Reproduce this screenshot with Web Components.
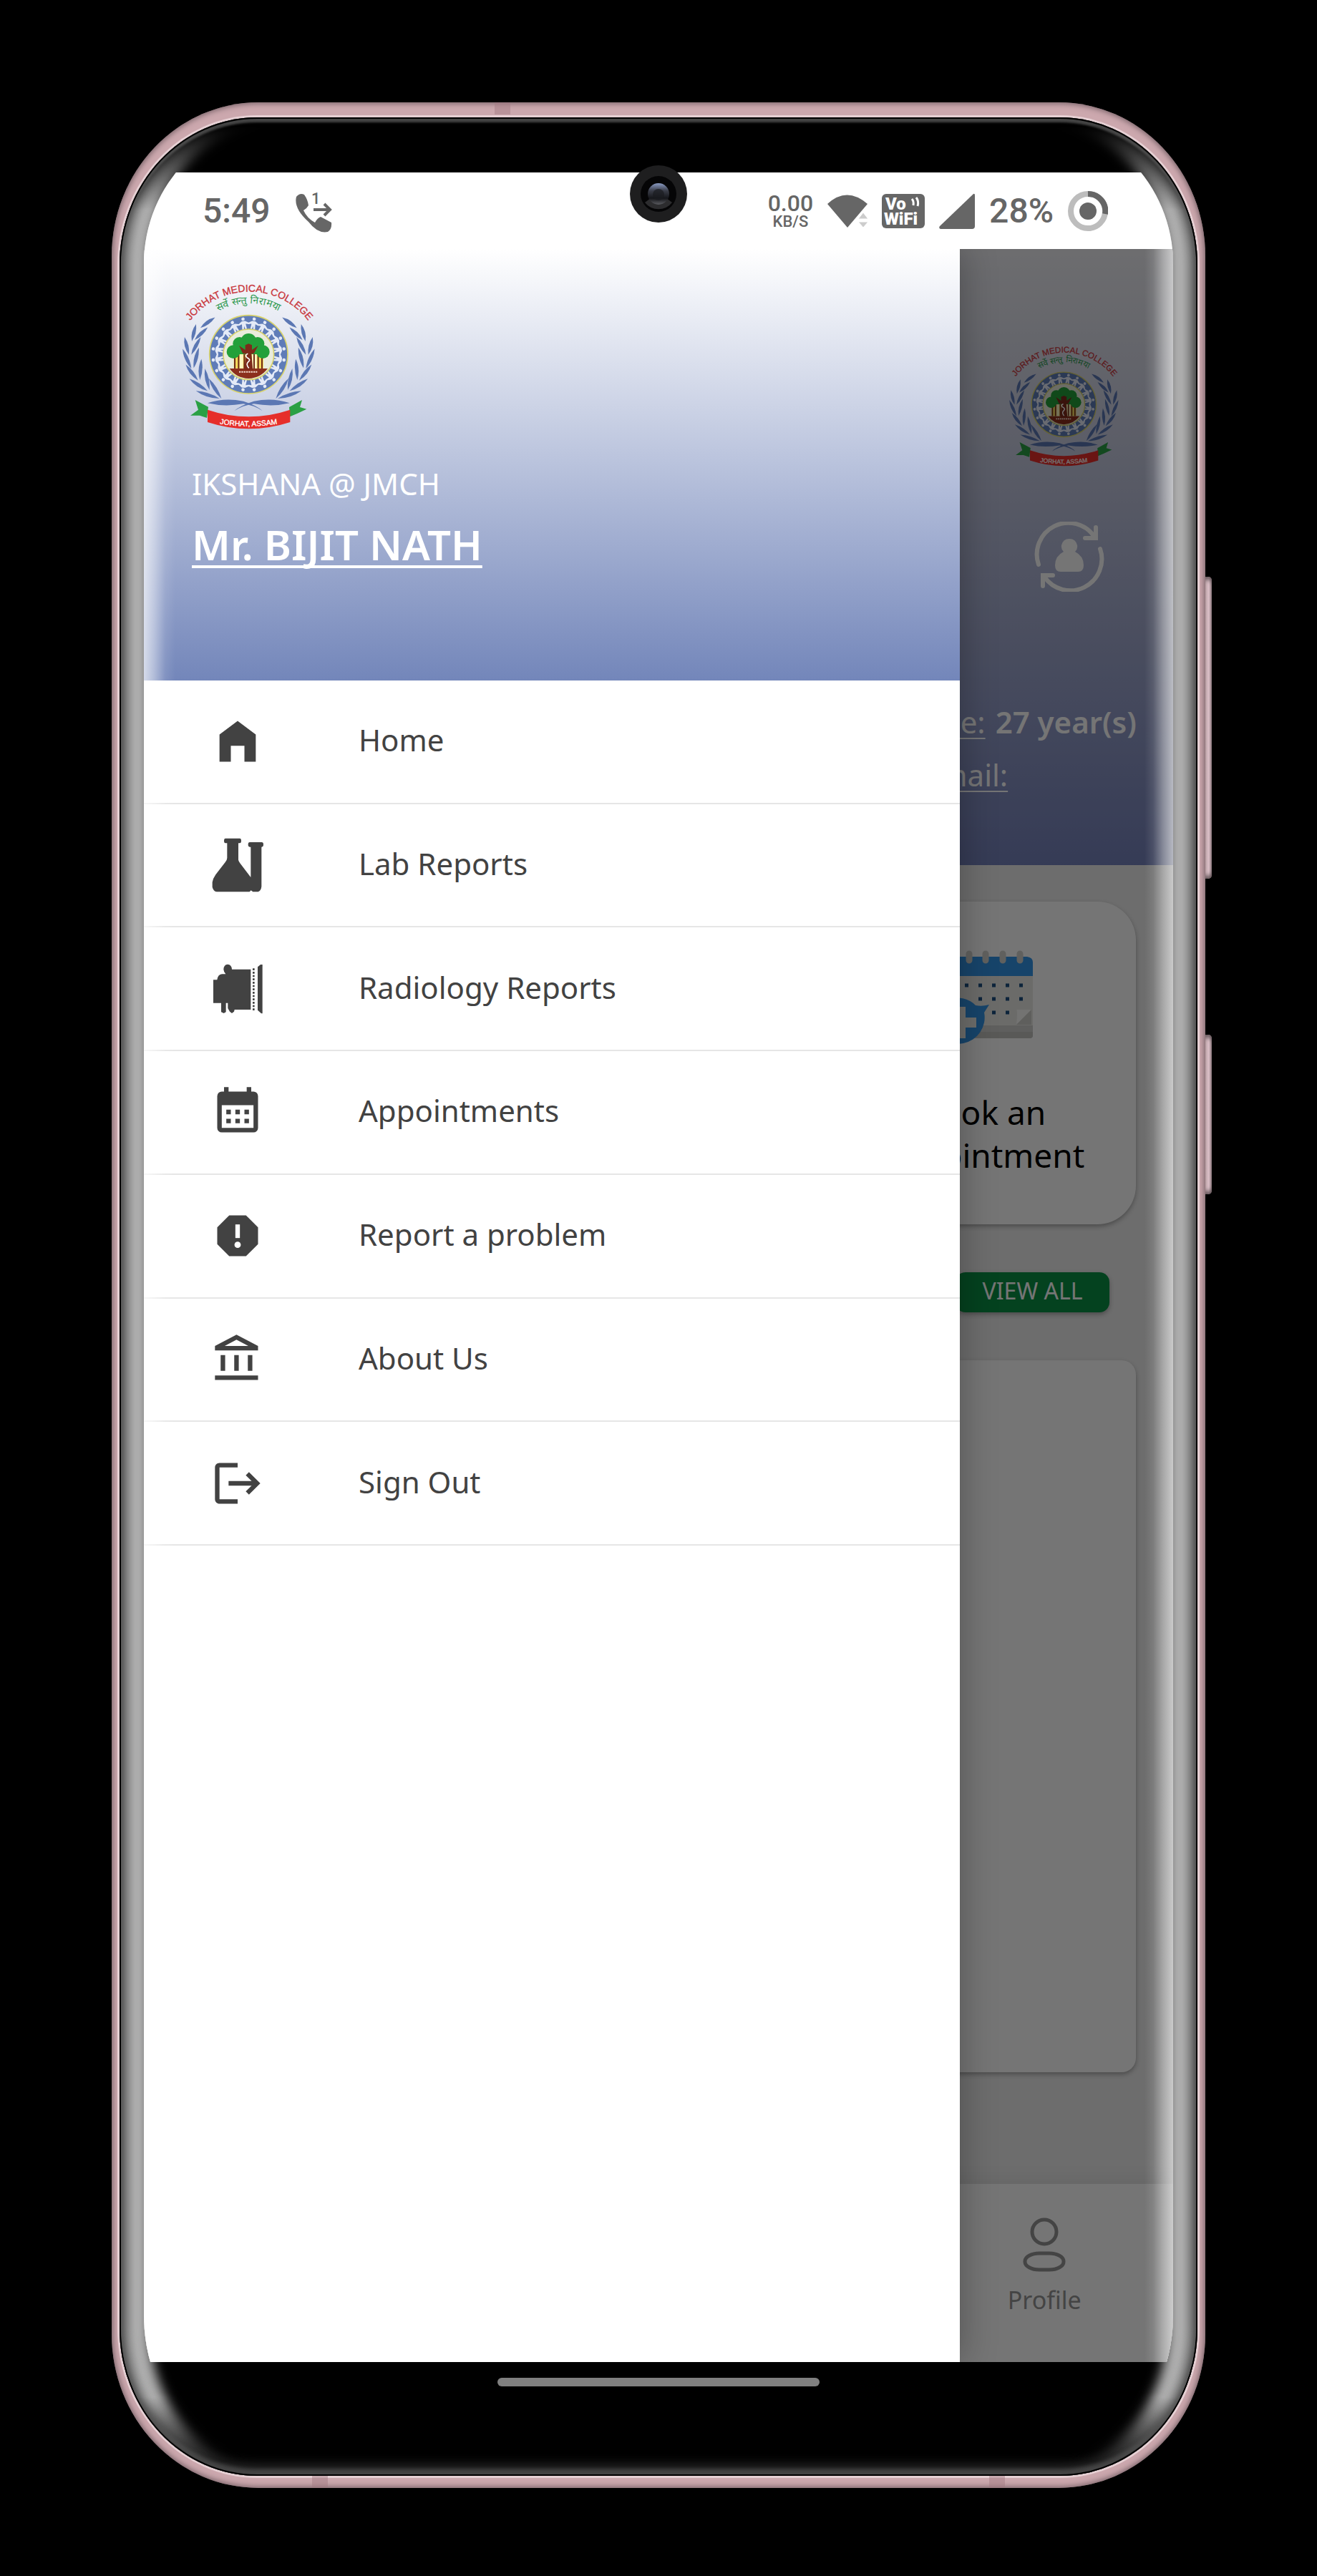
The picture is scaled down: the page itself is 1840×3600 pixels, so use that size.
<!DOCTYPE html>
<html lang="en">
<head>
<meta charset="utf-8">
<meta name="viewport" content="width=device-width, initial-scale=1">
<title>IKSHANA @ JMCH</title>
<style>
  body {
    margin: 0;
    padding: 143px 156px 123px;
    min-height: 100vh;
    box-sizing: border-box;
    display: flex;
    background: #000;
    font-family: "Noto Sans", "Open Sans", sans-serif;
    color: #424242;
  }
</style>
</head>
<body>
<device-frame>
  <status-bar time="5:49" battery="28%"></status-bar>
  <app-shell>
    <nav-drawer slot="drawer" org="IKSHANA @ JMCH" user="Mr. BIJIT NATH">
      <drawer-item icon="home" href="#home">Home</drawer-item>
      <drawer-item icon="lab" href="#lab">Lab Reports</drawer-item>
      <drawer-item icon="radiology" href="#radiology">Radiology Reports</drawer-item>
      <drawer-item icon="calendar" href="#appointments">Appointments</drawer-item>
      <drawer-item icon="report" href="#report">Report a problem</drawer-item>
      <drawer-item icon="about" href="#about">About Us</drawer-item>
      <drawer-item icon="logout" href="#logout">Sign Out</drawer-item>
    </nav-drawer>
    <home-page></home-page>
  </app-shell>
</device-frame>

<script>
// small helper, every element below uses an open root
function attach(el, html) {
  const template = document.createElement('template');
  template.innerHTML = html;
  const root = el.attachShadow({ mode: 'open' });
  root.appendChild(template.content.cloneNode(true));
  return root;
}

const ICONS = {
  home: ['0 0 24 24', '<path d="M12 3 4 9v12h5v-7h6v7h5V9z"/>'],
  lab: ['42 96 228 228', `
    <path d="M105 98h60a6 10 0 0 1 0 20h-6v70q2 8 8 15l44 58V134h-4a7 10 0 0 1 0-20h50a7 10 0 0 1 0 20h-1V300q-2 17-14 22h-22l-8-6-6 6H68q-14-3-18-20v-20q2-15 14-32l40-52q8-10 8-18v-62h-7a6 10 0 0 1 0-20z"/>`],
  radiology: ['42 614 228 228', `
    <path d="M54 690h16q3-22 20-24h16q-8-8-9-20 1-20 17-21 17 1 18 21h79v169h-68l-2 8-9 7-9-7-8-14v-22h-8v38l-9 5-11-5v-38H54z"/>
    <path d="M240 636l12-10h8v205h-5l-15-14z"/>
    <path d="M223 642v177" fill="none" stroke="currentColor" stroke-width="8" stroke-dasharray="8 6"/>`],
  calendar: ['0 0 24 24', '<path fill-rule="evenodd" d="M6 1h2v2h8V1h2v2h1a2 2 0 0 1 2 2v14a2 2 0 0 1-2 2H5a2 2 0 0 1-2-2V5a2 2 0 0 1 2-2h1zM5 9v10h14V9zM7 11h2v2H7zm4 0h2v2h-2zm4 0h2v2h-2zM7 15h2v2H7zm4 0h2v2h-2zm4 0h2v2h-2z"/>'],
  report: ['0 0 24 24', '<path d="M15.7 3H8.3L3 8.3v7.4L8.3 21h7.4l5.3-5.3V8.3z"/><path fill="#fff" d="M11 7h2v6h-2z"/><circle fill="#fff" cx="12" cy="16" r="1.4"/>'],
  about: ['0 0 24 24', '<path d="M6.5 10h-2v7h2v-7zm6 0h-2v7h2v-7zm8.500 9H2v2h19v-2zm-2.500-9h-2v7h2v-7zm-7-6.740L16.710 6H6.290l5.210-2.740m0-2.260L2 6v2h19V6l-9.500-5z"/>'],
  logout: ['0 0 24 24', '<path d="M17 7l-1.410 1.410L18.170 11H8v2h10.170l-2.580 2.580L17 17l5-5zM4 5h8V3H4c-1.100 0-2 .9-2 2v14c0 1.100.9 2 2 2h8v-2H4V5z"/>']
};

class DeviceFrame extends HTMLElement {
  constructor() {
    super();
    attach(this, `
      <style>
        :host {
          position: relative;
          flex: 1;
          display: flex;
          box-sizing: border-box;
          padding: 21px 11px 17px;
          border-radius: 205px / 215px;
          background: #cca8ae;
          box-shadow: inset 0 0 8px 1px #66545a;
        }
        .body {
          position: relative;
          flex: 1;
          display: flex;
          padding: 0 34px;
          border-radius: 192px / 206px;
          background: #000;
          box-shadow: 0 0 0 3px #e6d0d4, inset 0 0 0 2px #000,
            inset 0 7px 3px #444, inset 0 -9px 5px #444, inset 0 -15px 16px #2c2c2c;
        }
        /* side glow, dies out towards the top and bottom edges */
        .body::before {
          content: "";
          position: absolute;
          inset: 0 2px;
          border-radius: inherit;
          box-shadow: inset 4px 0 6px #555, inset -4px 0 6px #555,
            inset 12px 0 12px #777, inset -12px 0 12px #777,
            inset 40px 0 16px #b0b0b0, inset -40px 0 16px #b0b0b0;
          -webkit-mask-image: linear-gradient(transparent 12px, #000 130px, #000 calc(100% - 110px), transparent calc(100% - 20px));
          mask-image: linear-gradient(transparent 12px, #000 130px, #000 calc(100% - 110px), transparent calc(100% - 20px));
        }
        .glass {
          position: relative;
          flex: 1;
          display: flex;
          flex-direction: column;
          padding-top: 77px;
          overflow: hidden;
          border-radius: 205px 205px 205px 205px / 205px 205px 225px 225px;
        }
        .screen {
          position: relative;
          flex: 1;
          display: flex;
          flex-direction: column;
          background: #fff;
        }
        /* light caught by the curved glass on both sides */
        .screen::after {
          content: "";
          position: absolute;
          inset: 0;
          pointer-events: none;
          background:
            linear-gradient(to right, rgba(255,255,255,.7), rgba(255,255,255,.45) 14px, rgba(255,255,255,.1) 30px, transparent 44px),
            linear-gradient(to left, rgba(255,255,255,.64), rgba(255,255,255,.4) 14px, rgba(255,255,255,.1) 28px, transparent 40px);
        }
        .gesture { height: 159px; }
        .gesture i {
          display: block;
          width: 450px;
          height: 12px;
          margin: 22px auto;
          border-radius: 6px;
          background: #808080;
        }
        .camera {
          position: absolute;
          top: 88px;
          left: 50%;
          margin-left: -40px;
          width: 80px;
          height: 80px;
        }
        .key, .band { position: absolute; }
        .key {
          left: 100%;
          width: 9px;
          border-radius: 0 5px 5px 0;
          background: linear-gradient(to right, #c9adb3, #dcc0c8 5px, #8d7b80);
          box-shadow: inset 0 8px 6px -4px #64565a, inset 0 -8px 6px -4px #64565a;
        }
        .volume { top: 663px; height: 422px; }
        .power { top: 1303px; height: 223px; }
        .band { width: 22px; height: 17px; background: #a07880; opacity: .45; }
      </style>
      <div class="body">
        <div class="glass">
          <div class="screen"><slot></slot></div>
          <div class="gesture"><i></i></div>
        </div>
      </div>
      <svg class="camera" viewBox="0 0 80 80" aria-hidden="true">
        <defs>
          <linearGradient id="lens" x1="0" y1="0" x2="0" y2="1">
            <stop offset="0" stop-color="#8a9bc4"/><stop offset=".35" stop-color="#3a3d48"/>
            <stop offset=".7" stop-color="#15161a"/><stop offset="1" stop-color="#5a5b60"/>
          </linearGradient>
        </defs>
        <circle cx="40" cy="40" r="40" fill="#1e1e1f"/>
        <circle cx="40" cy="40" r="25" fill="#050506"/>
        <path d="M21 52a24 24 0 0 0 38 0l-8-6H29z" fill="#2c2c2e"/>
        <circle cx="40" cy="40" r="15" fill="url(#lens)"/>
        <circle cx="40" cy="41" r="8" fill="#1a1b20" opacity=".7"/>
      </svg>
      <span class="key volume"></span>
      <span class="key power"></span>
      <span class="band" style="top:0;left:35%"></span>
      <span class="band" style="bottom:0;left:18.3%"></span>
      <span class="band" style="bottom:0;right:18.3%"></span>
    `);
  }
}

class StatusBar extends HTMLElement {
  constructor() {
    super();
    const root = attach(this, `
      <style>
        :host {
          display: flex;
          align-items: center;
          height: 107px;
          box-sizing: border-box;
          padding: 0 91px 0 82px;
          font: 500 48px/56px Roboto, sans-serif;
          color: #666;
        }
        .call { width: 56px; height: 60px; margin: 0 auto 0 32px; }
        .right { display: flex; align-items: center; gap: 20px; }
        .speed { text-align: center; font-size: 32px; line-height: 30px; }
        .speed small { display: block; font-size: 22px; line-height: 22px; }
        svg { display: block; fill: currentColor; }
      </style>
      <span class="time"></span>
      <svg class="call" viewBox="0 -4 56 60">
        <path d="M4 6q5-6 11-3 5 7 6 15-2 4-7 7 5 11 16 17 4-7 8-8l15 8q1 9-5 13-14 3-27-14Q0 22 4 6z"/>
        <path d="M28 24h22M43 16l8 8-8 8" fill="none" stroke="currentColor" stroke-width="4"/>
        <text x="25" y="16" font-size="22">1</text>
      </svg>
      <div class="right">
        <div class="speed">0.00<small>KB/S</small></div>
        <svg width="56" height="46" viewBox="0 0 56 46">
          <path d="M0 13Q27-12 56 13L28 46z"/>
          <path d="M43 34l7-9 7 9zm0 4h14l-7 8z" fill="#ccc" stroke="#fff" stroke-width="1"/>
        </svg>
        <svg width="60" height="48" viewBox="0 0 60 48" font-weight="900">
          <rect width="60" height="48" rx="6"/>
          <text x="5" y="22" font-size="24" fill="#fff">Vo</text>
          <path d="M42 7q3 3 2 9M48 5q4 5 2 12" fill="none" stroke="#fff" stroke-width="3"/>
          <text x="3" y="43" font-size="24" fill="#fff">WiFi</text>
        </svg>
        <svg width="50" height="50" viewBox="0 0 50 50"><path d="M48 1q2-1 2 2v43q0 4-4 4H2q-3-1-1-4z"/></svg>
        <span class="battery"></span>
        <svg width="56" height="56" viewBox="0 0 56 56">
          <circle cx="28" cy="28" r="24" fill="none" stroke="#bdbdbd" stroke-width="8"/>
          <path d="M28 4a24 24 0 0 1 24 28" fill="none" stroke="currentColor" stroke-width="8"/>
          <circle cx="28" cy="28" r="12"/>
        </svg>
      </div>
    `);
    root.querySelector('.time').textContent = this.getAttribute('time');
    root.querySelector('.battery').textContent = this.getAttribute('battery');
  }
}

class CollegeLogo extends HTMLElement {
  constructor() {
    super();
    attach(this, `
      <style>
        :host { display: block; }
        svg { display: block; width: 100%; font-family: "Liberation Sans", sans-serif; }
      </style>
      <svg viewBox="45 50 555 612" role="img" aria-label="Jorhat Medical College">
        <defs>
          <path id="top" d="M54 240A311 311 0 0 1 596 240"/>
          <path id="motto" d="M160 188A261 261 0 0 1 484 188"/>
          <path id="foot" d="M180 633Q322 659 464 633"/>
        </defs>
        <text font-size="42" fill="#c9363c" stroke="#c9363c" text-anchor="middle"><textPath href="#top" startOffset="50%">JORHAT MEDICAL COLLEGE</textPath></text>
        <text font-size="42" fill="#2f9a50" text-anchor="middle"><textPath href="#motto" startOffset="50%">सर्वे सन्तु निरामया</textPath></text>
        <g fill="#5b77b3">${this.laurel()}</g>
        <g fill="#5b77b3">
          <path d="M150 549Q220 525 300 541 360 560 380 582 345 558 300 552 220 566 150 549z"/>
          <path d="M494 549Q424 525 344 541 284 560 262 582 299 558 344 552 424 566 494 549z"/>
        </g>
        <circle cx="322" cy="345" r="164" fill="#5f7cb8" stroke="#d9d36c" stroke-width="5"/>
        ${this.people()}
        <circle cx="322" cy="345" r="106" fill="#e9ecdc" stroke="#d9d36c" stroke-width="5"/>
        <path d="M242 404h160q-30 40-80 42-52-2-80-42z" fill="#8b2f1c"/>
        <path d="M260 345h124v58H260z" fill="#f6d95c"/>
        <path d="M285 345h14v58h-14zM336 345h20v58h-20z" fill="#fff6c0"/>
        <path d="M264 330v74M280 330v74M304 330v74M345 330v74M362 330v74M378 330v74" stroke="#6f2c17" stroke-width="6"/>
        <g fill="#23a03a">
          <circle cx="322" cy="290" r="33"/><circle cx="284" cy="300" r="28"/><circle cx="360" cy="300" r="28"/>
          <circle cx="258" cy="334" r="28"/><circle cx="382" cy="334" r="28"/>
          <path d="M258 300h126v44H258z"/>
        </g>
        <path d="M282 308l26 18V306l14-6 14 6v20l26-18-18 34h-10l6 68h-36l6-68h-12z" fill="#7d2a1b"/>
        <path d="M319 342q-14 6-4 16 18 8 6 18-12 10 2 26" fill="none" stroke="#fff" stroke-width="5"/>
        <path d="M282 418h76" stroke="#f3dcd0" stroke-width="6" stroke-dasharray="7 3"/>
        <path d="M98 536l55 29-6 46-30-10H78l33-24zM546 536l-54 30 3 40 32-14 38-18-28-8z" fill="#2aa044"/>
        <path d="M150 577q172 58 346 0v52q-174 56-346 0z" fill="#e62e2a"/>
        <text font-size="31" fill="#fff" stroke="#fff" text-anchor="middle"><textPath href="#foot" startOffset="50%">JORHAT, ASSAM</textPath></text>
      </svg>
    `);
  }

  // one branch of leaves, mirrored for the right side
  laurel() {
    const leaf = (x, y, r, len) => `<path transform="translate(${x} ${y}) rotate(${r})" d="M0 0Q-17 -${len / 2} 0 -${len}Q14 -${len / 2} 0 0z"/>`;
    const side = [
      [120, 234, 54, 76], [84, 290, 14, 74], [96, 284, 46, 76],
      [72, 346, -14, 76], [82, 346, 28, 84], [82, 404, -24, 90], [92, 402, 14, 88],
      [110, 454, -38, 84], [118, 452, 4, 88], [150, 498, -56, 92], [158, 494, -12, 92],
      [200, 530, -72, 104], [208, 530, -32, 100]
    ].map(l => leaf(...l)).join('');
    return `${side}<g transform="translate(644 0) scale(-1 1)">${side}</g>`;
  }

  people() {
    let out = '';
    for (let i = 0; i < 20; i++) {
      out += `<g transform="rotate(${i * 18 + 9} 322 345)" fill="#e4eaf7">
        <circle cx="322" cy="195" r="7"/>
        <path d="M315 204h14l14 9 4 7-17-4 2 22h-7l-3-13-3 13h-7l2-22-17 4 4-7z"/></g>`;
    }
    return out;
  }
}

class DrawerItem extends HTMLElement {
  constructor() {
    super();
    const [box, shape] = ICONS[this.getAttribute('icon')];
    attach(this, `
      <style>
        :host { display: flex; border-bottom: 2px solid #e6e6e6; }
        a {
          flex: 1;
          display: flex;
          align-items: center;
          gap: 131px;
          padding-left: 93px;
          color: inherit;
          text-decoration: none;
        }
        svg { width: 76px; height: 76px; fill: currentColor; }
        span { padding-bottom: 4px; font-size: 42px; line-height: 60px; }
      </style>
      <a href="${this.getAttribute('href')}">
        <svg viewBox="${box}" aria-hidden="true">${shape}</svg>
        <span><slot></slot></span>
      </a>
    `);
  }
}

class NavDrawer extends HTMLElement {
  constructor() {
    super();
    const root = attach(this, `
      <style>
        :host {
          display: block;
          background: #fff;
          box-shadow: 0 0 48px rgba(0, 0, 0, .3);
        }
        header {
          min-height: 603px;
          box-sizing: border-box;
          padding: 49px 54px 0 67px;
          background: linear-gradient(#fff, #7386ba);
          color: #fff;
        }
        college-logo { width: 185px; margin-left: -13px; }
        p { margin: 45px 0 0; font-size: 42px; line-height: 60px; }
        h1 {
          margin: 15px 0 0;
          font-size: 58px;
          line-height: 80px;
          font-weight: 600;
          text-decoration: underline;
          text-decoration-thickness: 4px;
          text-decoration-skip-ink: none;
          text-underline-offset: 7px;
        }
        nav { display: grid; grid-auto-rows: 1fr; min-height: 1209px; }
      </style>
      <header>
        <college-logo></college-logo>
        <p></p>
        <h1></h1>
      </header>
      <nav><slot></slot></nav>
    `);
    root.querySelector('p').textContent = this.getAttribute('org');
    root.querySelector('h1').textContent = this.getAttribute('user');
  }
}

class AppShell extends HTMLElement {
  constructor() {
    super();
    attach(this, `
      <style>
        :host { position: relative; flex: 1; display: flex; overflow: hidden; }
        .page { flex: 1; display: flex; }
        .scrim { position: absolute; inset: 0; background: rgba(0, 0, 0, .54); }
        ::slotted(nav-drawer) { position: absolute; top: 0; bottom: 0; left: 0; width: 79.3%; }
      </style>
      <div class="page"><slot></slot></div>
      <div class="scrim"></div>
      <slot name="drawer"></slot>
    `);
  }
}

class HomePage extends HTMLElement {
  constructor() {
    super();
    attach(this, `
      <style>
        :host { flex: 1; display: flex; flex-direction: column; background: #ededed; }
        header {
          min-height: 861px;
          box-sizing: border-box;
          display: flex;
          flex-direction: column;
          align-items: flex-end;
          padding: 136px 58px 0;
          background: linear-gradient(#eeeef2, #7582bb);
          color: #fff;
        }
        college-logo { width: 153px; margin-right: 18px; }
        .sync { margin: 76px 38px 0; padding: 0; border: 0; background: none; }
        .sync svg { display: block; width: 98px; height: 98px; }
        dl { margin: 145px 0 0; width: 292px; font-size: 42px; line-height: 74px; white-space: nowrap; }
        dl div { display: flex; gap: 14px; }
        dt { text-decoration: underline; text-decoration-thickness: 2px; text-underline-offset: 6px; }
        dd { margin: 0; font-weight: 600; }
        main {
          flex: 1;
          display: flex;
          flex-direction: column;
          align-items: flex-end;
          gap: 67px;
          padding: 51px 52px 156px;
        }
        .card { border-radius: 20px; background: #fff; box-shadow: 0 3px 6px rgba(0, 0, 0, .3); }
        .book {
          width: 428px;
          min-height: 451px;
          box-sizing: border-box;
          padding-top: 68px;
          border-radius: 54px;
          text-align: center;
          font-size: 46px;
          line-height: 60px;
          color: #000;
          text-decoration: none;
        }
        .book svg { display: block; width: 140px; height: 136px; margin: 0 auto 60px; }
        .all {
          width: 215px;
          height: 56px;
          margin-right: 37px;
          padding: 0 0 4px;
          border: 0;
          border-radius: 14px;
          background: #0a9045;
          color: #fff;
          font: 32px/48px "Noto Sans", sans-serif;
          box-shadow: 0 3px 6px rgba(0, 0, 0, .3);
        }
        .list { flex: 1; align-self: stretch; }
        footer {
          display: grid;
          grid-template-columns: repeat(4, 1fr);
          height: 249px;
          background: #fff;
          box-shadow: 0 -4px 24px rgba(0, 0, 0, .08);
        }
        footer a {
          grid-column: 4;
          display: flex;
          flex-direction: column;
          align-items: center;
          gap: 19px;
          padding-top: 47px;
          font-size: 34px;
          line-height: 40px;
          color: #949494;
          text-decoration: none;
        }
        footer svg { width: 60px; height: 76px; }
      </style>
      <header>
        <college-logo></college-logo>
        <button class="sync" aria-label="Switch patient">
          <svg viewBox="0 0 98 98" fill="none" stroke="#fff" stroke-width="6" stroke-linecap="round">
            <path d="M6 60A44 44 0 0 1 84 21M86 8v15H71"/>
            <path d="M92 38A44 44 0 0 1 14 77M12 90V75h14"/>
            <path d="M41 42q-4-4-3-9 2-9 11-9t11 9q1 5-3 9 12 6 12 19 0 9-8 9H37q-8 0-8-9 0-13 12-19z" fill="#fff" stroke="none"/>
          </svg>
        </button>
        <dl>
          <div><dt>Age:</dt><dd>27 year(s)</dd></div>
          <div><dt>Email:</dt><dd></dd></div>
        </dl>
      </header>
      <main>
        <a class="card book" href="#book">
          <svg viewBox="1304 1328 140 136" aria-hidden="true">
            <path d="M1304 1360h140v87q0 4-5 4h-135z" fill="#e9e9e5"/>
            <path d="M1304 1433h140v14q0 4-5 4h-135z" fill="#d0d0cc"/>
            <path d="M1304 1442h140v5q0 4-5 4h-135z" fill="#c2c2be"/>
            <path d="M1304 1337h132q8 1 8 8v19h-140z" fill="#3394e6"/>
            <path d="M1421 1432q2-20 0-21h21z" fill="#fafaf8"/>
            <path d="M1421 1432l21-21v21z" fill="#cfcfcb"/>
            <path d="M1331 1333v9M1355 1333v9M1378 1333v9M1402 1333v9M1426 1333v9" stroke="#d2d2ce" stroke-width="9" stroke-linecap="round"/>
            <path d="M1349 1377h84M1368 1396h65M1387 1415h28" stroke="#1d4f80" stroke-width="5" stroke-dasharray="5 14"/>
            <path d="M1304 1429a35 35 0 0 1 60-24q9 2 19-1l-7 11a35 35 0 1 1-72 14z" fill="#3394e6"/>
            <path d="M1338 1407h12v15h15v14h-15v15h-12v-15h-15v-14h15z" fill="#eeeeea"/>
          </svg>
          Book an<br>Appointment
        </a>
        <button class="all">VIEW ALL</button>
        <section class="card list"></section>
      </main>
      <footer>
        <a href="#profile">
          <svg viewBox="0 0 60 76" fill="none" stroke="currentColor" stroke-width="5">
            <circle cx="30" cy="20" r="17"/>
            <rect x="3" y="50" width="54" height="23" rx="20" ry="11"/>
          </svg>
          Profile
        </a>
      </footer>
    `);
  }
}

customElements.define('device-frame', DeviceFrame);
customElements.define('status-bar', StatusBar);
customElements.define('college-logo', CollegeLogo);
customElements.define('drawer-item', DrawerItem);
customElements.define('nav-drawer', NavDrawer);
customElements.define('app-shell', AppShell);
customElements.define('home-page', HomePage);
</script>
</body>
</html>
